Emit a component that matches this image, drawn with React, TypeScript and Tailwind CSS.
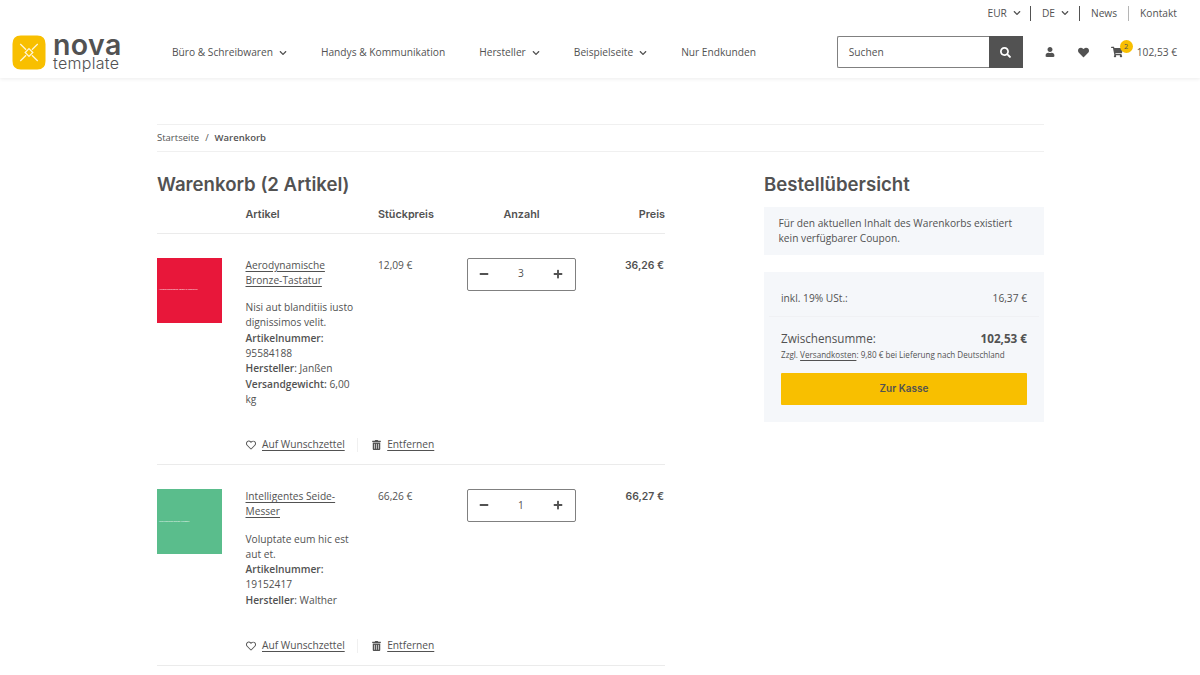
import React from "react";
import { FaChevronDown, FaHeart, FaMinus, FaPlus, FaRegHeart, FaSearch, FaShoppingCart, FaTrashAlt, FaUser } from "react-icons/fa";

const heading = "font-['Inter',sans-serif]";

function Chevron({ className = "ml-[6px]" }: { className?: string }) {
  return <FaChevronDown className={`${className} w-[8px] h-[8px] text-[#525252]`} />;
}

function Logo() {
  return (
    <div className="flex items-center">
      <svg width="34" height="35" viewBox="0 0 35 35" preserveAspectRatio="none" className="shrink-0">
        <path d="M9 0.5 H26 Q34.5 0.5 34.5 9 V26 Q34.5 34.5 26 34.5 H9 Q0.5 34.5 0.5 26 V9 Q0.5 0.5 9 0.5 Z" fill="#F8BF00" />
        <g stroke="#FFF6D8" strokeWidth="1.3" fill="none">
          <path d="M8.5 9 L14.5 14.8 M26.5 9 L20.5 14.8 M8.5 26 L14.5 20.2 M26.5 26 L20.5 20.2" />
          <path d="M17.5 13.6 L21.4 17.5 L17.5 21.4 L13.6 17.5 Z" />
        </g>
      </svg>
      <div className="ml-[7px] flex flex-col text-[#525252]">
        <span className="font-['Inter',sans-serif] font-semibold text-[28.5px] leading-[21px] tracking-[0.4px]">nova</span>
        <span className="font-['Inter',sans-serif] font-light text-[16px] leading-[15px] tracking-[0.3px] mt-[1px]">template</span>
      </div>
    </div>
  );
}

function NavItem({ label, chevron }: { label: string; chevron?: boolean }) {
  return (
    <span className="flex items-center whitespace-nowrap">
      {label}
      {chevron && <Chevron className="ml-[6px]" />}
    </span>
  );
}

function Header() {
  return (
    <header className="h-[78px] bg-white shadow-[0_1px_4px_rgba(0,0,0,0.08)] text-[#525252] text-[10.2px]">
      <div className="h-[27px] flex items-center justify-end pr-[23px]">
        <span className="flex items-center pr-[9px]">EUR<Chevron className="ml-[6px]" /></span>
        <span className="h-[15px] border-l border-[#525252]" />
        <span className="flex items-center pl-[11px] pr-[10px]">DE<Chevron className="ml-[6px]" /></span>
        <span className="h-[15px] border-l border-[#525252]" />
        <span className="pl-[11px] pr-[11px]">News</span>
        <span className="h-[15px] border-l border-[#b5b5b5]" />
        <span className="pl-[11px]">Kontakt</span>
      </div>
      <div className="h-[50px] flex items-center pl-[12px] pr-[23px]">
        <div className="w-[160px]"><Logo /></div>
        <nav className="flex items-center gap-[34px] flex-1 pt-[2px]">
          <NavItem label="Büro & Schreibwaren" chevron />
          <NavItem label="Handys & Kommunikation" />
          <NavItem label="Hersteller" chevron />
          <NavItem label="Beispielseite" chevron />
          <NavItem label="Nur Endkunden" />
        </nav>
        <div className="flex w-[186px] h-[32px]">
          <div className="flex-1 border border-[#808080] border-r-0 rounded-l-[2px] pl-[11px] pt-[2px] flex items-center">Suchen</div>
          <div className="w-[34px] bg-[#525252] flex items-center justify-center">
            <FaSearch className="w-[11px] h-[11px] text-white" />
          </div>
        </div>
        <FaUser className="ml-[22px] w-[10px] h-[10px] text-[#525252]" />
        <FaHeart className="ml-[23px] w-[11px] h-[11px] text-[#525252]" />
        <div className="relative ml-[22px] mr-[6px]">
          <FaShoppingCart className="w-[12px] h-[12px] text-[#525252]" />
          <span className="absolute -top-[6px] left-[9px] w-[13px] h-[13px] rounded-full bg-[#F8BF00] text-[7.5px] leading-[13px] text-center">2</span>
        </div>
        <span className="ml-[8px] pt-[2px]">102,53 €</span>
      </div>
    </header>
  );
}

function Qty({ value }: { value: number }) {
  return (
    <div className="w-[109px] h-[33px] border border-[#808080] rounded-[2px] flex items-center justify-between px-[11px]">
      <FaMinus className="w-[10px] h-[10px] text-[#525252]" />
      <span className="text-[10.2px]">{value}</span>
      <FaPlus className="w-[10px] h-[10px] text-[#525252]" />
    </div>
  );
}

type Item = {
  color: string;
  imageText: string;
  name: string[];
  desc: string[];
  unit: string;
  qty: number;
  price: string;
  number: string;
  maker: string;
  weight?: boolean;
};

function Row({ item }: { item: Item }) {
  return (
    <div className="border-b border-[#ebebeb] pt-[23.5px] pb-[12.3px] flex">
      <div className="w-[88.5px] shrink-0">
        <div className="w-[65px] h-[65px] flex items-center text-white text-[2.5px] pl-[2px]" style={{ backgroundColor: item.color }}>
          {item.imageText}
        </div>
      </div>
      <div className="w-[221px] shrink-0">
        <div className="flex">
          <div className="w-[132.5px] shrink-0">
            <div className="underline underline-offset-2 whitespace-nowrap">
              {item.name.map((n) => <div key={n}>{n}</div>)}
            </div>
            <div className="mt-[12px] whitespace-nowrap">
              {item.desc.map((d) => <div key={d}>{d}</div>)}
              <div className="font-semibold">Artikelnummer:</div>
              <div>{item.number}</div>
              <div><span className="font-semibold">Hersteller</span>: {item.maker}</div>
              {item.weight && (
                <>
                  <div><span className="font-semibold">Versandgewicht:</span> 6,00</div>
                  <div>kg</div>
                </>
              )}
            </div>
          </div>
          <div className="whitespace-nowrap">{item.unit}</div>
        </div>
        <div className="flex items-center mt-[30px] h-[15px] whitespace-nowrap">
          <FaRegHeart className="w-[10px] h-[10px] text-[#525252]" />
          <span className="ml-[6.5px] underline underline-offset-2">Auf Wunschzettel</span>
          <span className="ml-[12px] h-[14px] border-l border-[#f0f0f0]" />
          <FaTrashAlt className="ml-[14.5px] w-[9px] h-[10px] text-[#525252]" />
          <span className="ml-[6px] underline underline-offset-2">Entfernen</span>
        </div>
      </div>
      <Qty value={item.qty} />
      <div className={`${heading} flex-1 text-right font-semibold text-[10.4px] whitespace-nowrap pr-[1px]`}>{item.price}</div>
    </div>
  );
}

const items: Item[] = [
  {
    color: "#E8173A",
    imageText: "Aerodynamische Bronze-Tastatur",
    name: ["Aerodynamische", "Bronze-Tastatur"],
    desc: ["Nisi aut blanditiis iusto", "dignissimos velit."],
    unit: "12,09 €",
    qty: 3,
    price: "36,26 €",
    number: "95584188",
    maker: "Janßen",
    weight: true,
  },
  {
    color: "#5ABD8C",
    imageText: "Intelligentes Seide-Messer",
    name: ["Intelligentes Seide-", "Messer"],
    desc: ["Voluptate eum hic est", "aut et."],
    unit: "66,26 €",
    qty: 1,
    price: "66,27 €",
    number: "19152417",
    maker: "Walther",
  },
];

export default function App() {
  return (
    <div className="w-[1200px] h-[675px] overflow-hidden bg-white font-['Open_Sans',sans-serif] text-[#525252] text-[10.2px] leading-[15.3px]">
      <Header />
      <main className="w-[887px] ml-[157px] mt-[46px]">
        <div className="h-[28px] border-y border-[#f0f0f0] flex items-center text-[9.5px]">
          <span>Startseite</span>
          <span className="mx-[6px]">/</span>
          <span className="font-semibold">Warenkorb</span>
        </div>
        <div className="flex mt-[21px]">
          <section className="w-[508px] shrink-0">
            <h1 className={`${heading} font-semibold text-[18.6px] leading-[22px]`}>Warenkorb (2 Artikel)</h1>
            <div className={`${heading} font-semibold h-[39px] pt-[2px] flex items-center border-b border-[#ebebeb] text-[10.8px]`}>
              <span className="w-[88.5px]" />
              <span className="w-[132.5px]">Artikel</span>
              <span className="w-[89px]">Stückpreis</span>
              <span className="w-[109px] text-center">Anzahl</span>
              <span className="flex-1 text-right">Preis</span>
            </div>
            {items.map((item) => <Row key={item.number} item={item} />)}
          </section>
          <aside className="w-[280px] ml-[99px] shrink-0">
            <h2 className={`${heading} font-semibold text-[18.6px] leading-[22px]`}>Bestellübersicht</h2>
            <div className="mt-[12px] bg-[#f5f7fa] h-[48px] px-[14.5px] flex items-center">
              <div>Für den aktuellen Inhalt des Warenkorbs existiert<br />kein verfügbarer Coupon.</div>
            </div>
            <div className="mt-[17px] bg-[#f5f7fa] h-[150px] px-[5px]">
              <div className="h-[45px] border-b border-[#f0f1f4] px-[12px] pt-[9px] flex items-center justify-between">
                <span>inkl. 19% USt.:</span>
                <span>16,37 €</span>
              </div>
              <div className="px-[12px]">
                <div className="flex items-center justify-between mt-[12px] text-[11.7px] leading-[18px]">
                  <span>Zwischensumme:</span>
                  <span className="font-bold">102,53 €</span>
                </div>
                <div className="text-[8.1px] leading-[12px] mt-[2px] whitespace-nowrap">
                  Zzgl. <span className="underline underline-offset-2">Versandkosten</span>: 9,80 € bei Lieferung nach Deutschland
                </div>
                <div className={`${heading} mt-[12px] h-[32px] bg-[#F8BF00] rounded-[1px] flex items-center justify-center font-semibold text-[10px]`}>Zur Kasse</div>
              </div>
            </div>
          </aside>
        </div>
      </main>
    </div>
  );
}
